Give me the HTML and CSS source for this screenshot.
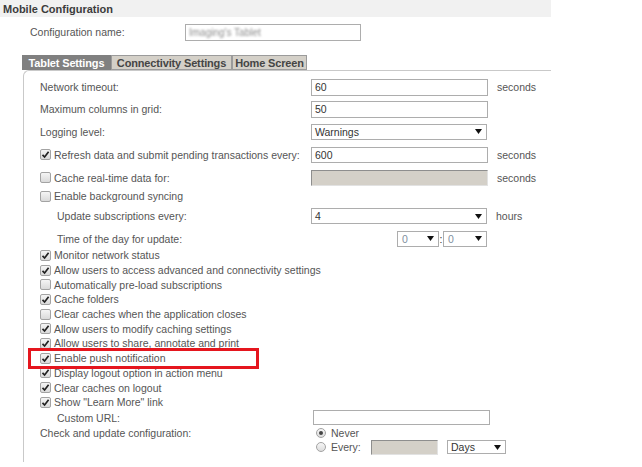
FILE: index.html
```html
<!DOCTYPE html>
<html>
<head>
<meta charset="utf-8">
<title>Mobile Configuration</title>
<link rel="stylesheet" href="styles.css">
</head>
<body>
<div class="page">
  <div class="title">Mobile Configuration</div>
  <div class="config-row">
    <span class="config-label">Configuration name:</span>
    <span class="input name-input"><span class="blur">Imaging's Tablet</span></span>
  </div>
  <div class="tabs">
    <span class="tab active t1">Tablet Settings</span>
    <span class="tab t2">Connectivity Settings</span>
    <span class="tab t3">Home Screen</span>
  </div>
  <div class="panel">
    <div class="row h22">
      <span class="label">Network timeout:</span>
      <span class="input w177">60</span>
      <span class="unit">seconds</span>
    </div>
    <div class="row h22">
      <span class="label">Maximum columns in grid:</span>
      <span class="input w177">50</span>
    </div>
    <div class="row h23">
      <span class="label">Logging level:</span>
      <span class="input select w176 h16">Warnings<svg class="arrow" width="7" height="5" viewBox="0 0 7 5"><path d="M0 0H7L3.5 5Z"/></svg></span>
    </div>
    <div class="row h23">
      <span class="label"><span class="cb"><svg width="9" height="9" viewBox="0 0 9 9"><path d="M1.5 4.8L3.6 7L7.6 1.8" /></svg></span>Refresh data and submit pending transactions every:</span>
      <span class="input w177 h16">600</span>
      <span class="unit">seconds</span>
    </div>
    <div class="row h23">
      <span class="label"><span class="cb"></span>Cache real-time data for:</span>
      <span class="input disabled w177 h16"></span>
      <span class="unit">seconds</span>
    </div>
    <div class="row h14">
      <span class="label"><span class="cb"></span>Enable background syncing</span>
    </div>
    <div class="row h26 indent">
      <span class="label">Update subscriptions every:</span>
      <span class="input select w176 h16">4<svg class="arrow" width="7" height="5" viewBox="0 0 7 5"><path d="M0 0H7L3.5 5Z"/></svg></span>
      <span class="unit">hours</span>
    </div>
    <div class="row h19 indent">
      <span class="label">Time of the day for update:</span>
      <span class="time">
        <span class="input select small w42">0<svg class="arrow" width="7" height="5" viewBox="0 0 7 5"><path d="M0 0H7L3.5 5Z"/></svg></span>
        <span class="colon">:</span>
        <span class="input select small w44">0<svg class="arrow" width="7" height="5" viewBox="0 0 7 5"><path d="M0 0H7L3.5 5Z"/></svg></span>
      </span>
    </div>
    <div class="row cbrow"><span class="cb"><svg width="9" height="9" viewBox="0 0 9 9"><path d="M1.5 4.8L3.6 7L7.6 1.8" /></svg></span>Monitor network status</div>
    <div class="row cbrow"><span class="cb"><svg width="9" height="9" viewBox="0 0 9 9"><path d="M1.5 4.8L3.6 7L7.6 1.8" /></svg></span>Allow users to access advanced and connectivity settings</div>
    <div class="row cbrow"><span class="cb"></span>Automatically pre-load subscriptions</div>
    <div class="row cbrow"><span class="cb"><svg width="9" height="9" viewBox="0 0 9 9"><path d="M1.5 4.8L3.6 7L7.6 1.8" /></svg></span>Cache folders</div>
    <div class="row cbrow"><span class="cb"></span>Clear caches when the application closes</div>
    <div class="row cbrow"><span class="cb"><svg width="9" height="9" viewBox="0 0 9 9"><path d="M1.5 4.8L3.6 7L7.6 1.8" /></svg></span>Allow users to modify caching settings</div>
    <div class="row cbrow"><span class="cb"><svg width="9" height="9" viewBox="0 0 9 9"><path d="M1.5 4.8L3.6 7L7.6 1.8" /></svg></span>Allow users to share, annotate and print</div>
    <div class="row cbrow"><span class="cb"><svg width="9" height="9" viewBox="0 0 9 9"><path d="M1.5 4.8L3.6 7L7.6 1.8" /></svg></span>Enable push notification</div>
    <div class="row cbrow"><span class="cb"><svg width="9" height="9" viewBox="0 0 9 9"><path d="M1.5 4.8L3.6 7L7.6 1.8" /></svg></span>Display logout option in action menu</div>
    <div class="row cbrow"><span class="cb"><svg width="9" height="9" viewBox="0 0 9 9"><path d="M1.5 4.8L3.6 7L7.6 1.8" /></svg></span>Clear caches on logout</div>
    <div class="row cbrow"><span class="cb"><svg width="9" height="9" viewBox="0 0 9 9"><path d="M1.5 4.8L3.6 7L7.6 1.8" /></svg></span>Show "Learn More" link</div>
    <div class="row h16 indent">
      <span class="label">Custom URL:</span>
      <span class="input url w177 h15"></span>
    </div>
    <div class="check-row">
      <span class="label check-label">Check and update configuration:</span>
      <div class="radios">
        <div class="radio-line r1"><span class="radio on"></span>Never</div>
        <div class="radio-line r2"><span class="radio"></span><span class="every">Every:</span><span class="input disabled w67 h15"></span><span class="input select days">Days<svg class="arrow" width="7" height="5" viewBox="0 0 7 5"><path d="M0 0H7L3.5 5Z"/></svg></span></div>
      </div>
    </div>
    <div class="highlight"></div>
  </div>
</div>
</body>
</html>
```
FILE: styles.css
```css
body {
  margin: 0;
  font-family: "Liberation Sans", Arial, sans-serif;
  font-size: 10.5px;
  color: #555;
  background: #fff;
}
.page {
  width: 551px;
}
.title {
  height: 17px;
  background: #f1f1f1;
  font-weight: bold;
  font-size: 11px;
  color: #3c3c3c;
  padding-left: 3px;
  display: flex;
  align-items: center;
}
.config-row {
  display: flex;
  align-items: center;
  height: 16px;
  margin-top: 7px;
  padding-left: 30px;
}
.config-label {
  width: 155px;
}
.name-input {
  width: 176px;
  height: 16px;
  padding-left: 10px;
}
.blur {
  color: #8c8c8c;
  font-size: 10px;
  filter: blur(1.1px);
}
.tabs {
  display: flex;
  margin-top: 15px;
  padding-left: 22px;
  height: 15px;
}
.tab {
  box-sizing: border-box;
  height: 15px;
  display: flex;
  align-items: center;
  justify-content: center;
  font-weight: bold;
  font-size: 11px;
  letter-spacing: -0.15px;
  background: #d4d0c8;
  border: 1px solid #9b9b9b;
  color: #454545;
}
.tab.active {
  background: #808080;
  border-color: #808080;
  color: #fff;
}
.t1 { width: 89px; }
.t2 { width: 121px; }
.t3 { width: 75px; }
.panel {
  position: relative;
  box-sizing: border-box;
  height: 392px;
  margin-left: 23px;
  border-top: 1px solid #c9c9c9;
  border-left: 1px solid #c9c9c9;
  border-top-left-radius: 6px;
  padding: 5px 0 0 16px;
}
.row {
  display: flex;
  align-items: center;
}
.h14 { height: 14px; }
.h16 { height: 16px; }
.h19 { height: 19px; }
.h22 { height: 22px; }
.h23 { height: 23px; }
.h26 { height: 26px; }
.cbrow { height: 14.7px; }
.label {
  width: 271px;
  flex: none;
  display: flex;
  align-items: center;
}
.indent {
  padding-left: 17px;
}
.indent .label {
  width: 254px;
}
.input {
  box-sizing: border-box;
  height: 17px;
  border: 1px solid #adadad;
  background: #fff;
  color: #333;
  padding: 0 3px;
  display: flex;
  align-items: center;
  flex: none;
}
.input.h16 { height: 16px; }
.input.h15 { height: 15px; }
.w177 { width: 177px; }
.w176 { width: 176px; }
.w42 { width: 42px; }
.w44 { width: 44px; }
.w67 { width: 67px; }
.select {
  justify-content: space-between;
  padding-right: 4px;
}
.arrow {
  fill: #111;
}
.disabled {
  background: #d4d0c8;
  border-color: #8e8e8e #e2e2e2 #e2e2e2 #8e8e8e;
}
.unit {
  margin-left: 9px;
}
.time {
  width: 176px;
  display: flex;
  justify-content: flex-end;
  align-items: center;
}
.small {
  height: 16px;
  color: #7f8fa0;
  padding-left: 4px;
}
.colon {
  width: 4px;
  text-align: center;
  color: #333;
}
.cb {
  box-sizing: border-box;
  width: 11px;
  height: 11px;
  border: 1px solid #a3a3a3;
  border-radius: 2px;
  background: linear-gradient(#f5f5f5, #dadada);
  margin-right: 3px;
  display: flex;
  align-items: center;
  justify-content: center;
  flex: none;
}
.cb path {
  fill: none;
  stroke: #222;
  stroke-width: 1.7;
}
.url {
  margin-left: 2px;
}
.check-row {
  display: flex;
  align-items: flex-start;
}
.check-label {
  height: 14px;
}
.radios {
  margin-left: 5px;
}
.radio-line {
  display: flex;
  align-items: center;
}
.r1 { height: 14px; }
.r2 { height: 15px; }
.radio {
  box-sizing: border-box;
  width: 10px;
  height: 10px;
  border: 1px solid #a3a3a3;
  border-radius: 50%;
  background: linear-gradient(#f6f6f6, #dcdcdc);
  margin-right: 5px;
  display: flex;
  align-items: center;
  justify-content: center;
}
.radio.on::after {
  content: "";
  width: 4px;
  height: 4px;
  border-radius: 50%;
  background: #444;
}
.every {
  width: 40px;
}
.days {
  width: 59px;
  height: 14px;
  margin-left: 9px;
}
.highlight {
  position: absolute;
  left: 4px;
  top: 277px;
  width: 231px;
  height: 21px;
  box-sizing: border-box;
  border: 3px solid #e5161e;
}
```
